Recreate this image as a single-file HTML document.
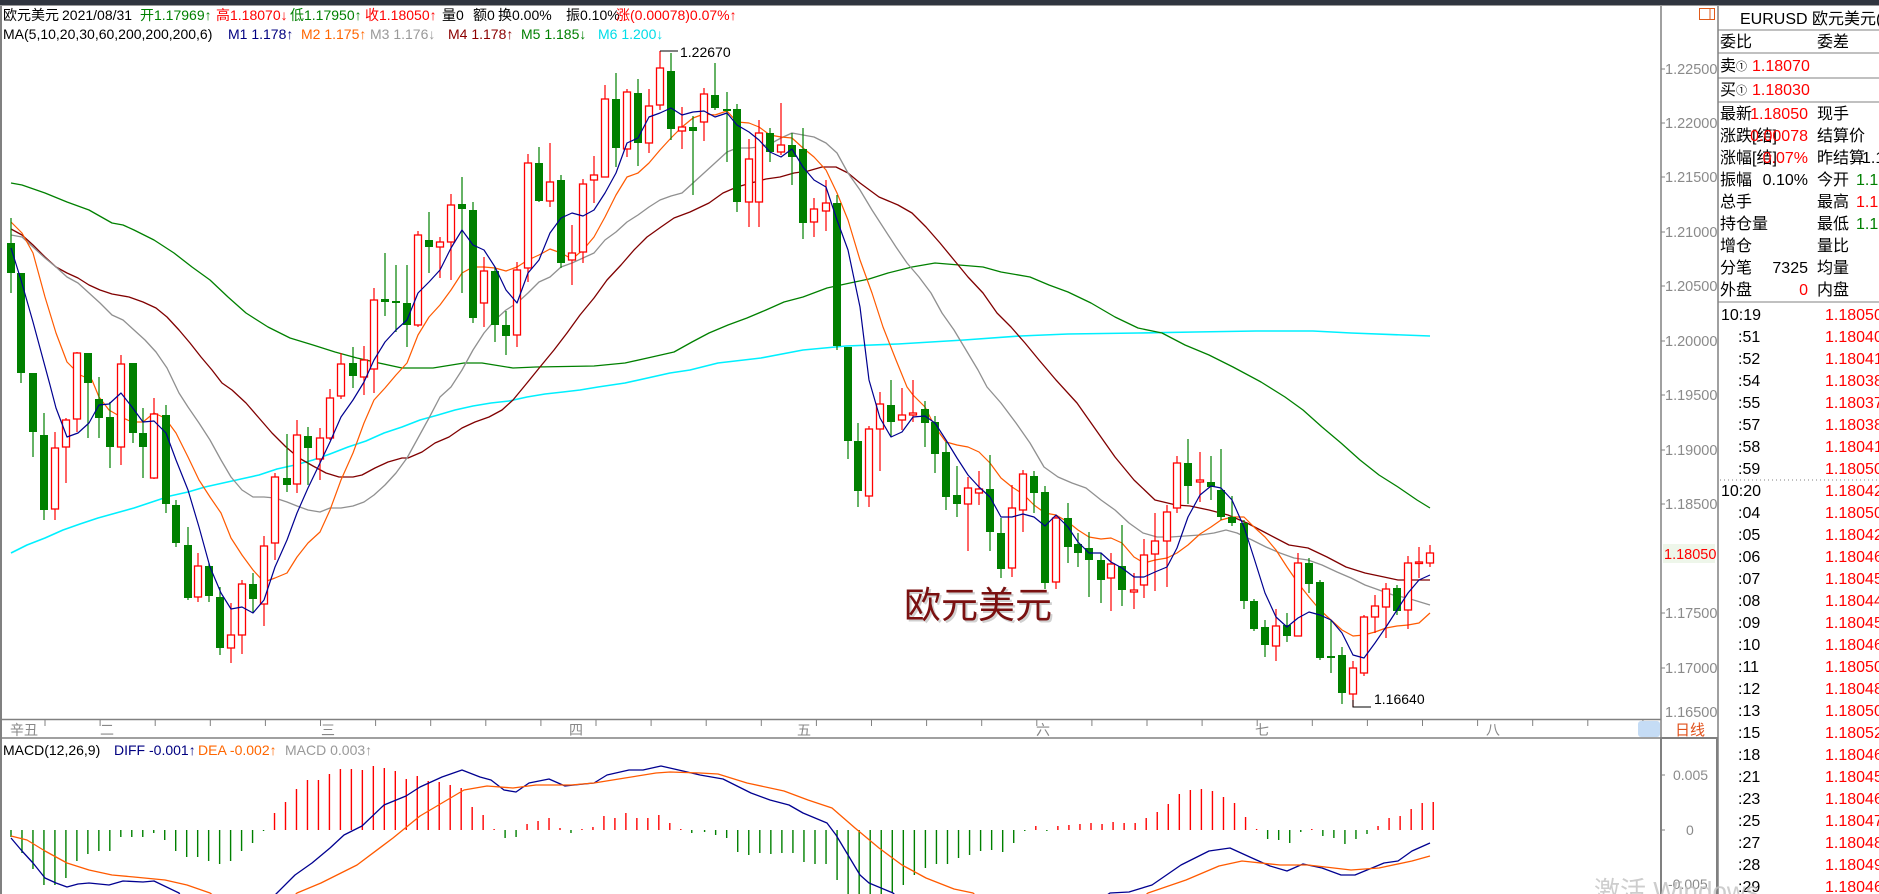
<!DOCTYPE html>
<html><head><meta charset="utf-8">
<style>
html,body{margin:0;padding:0;background:#fff;overflow:hidden}
svg{display:block;font-family:"Liberation Sans","Noto Sans CJK SC",sans-serif}
</style></head>
<body>
<svg id="s" xmlns="http://www.w3.org/2000/svg" width="1879" height="894" viewBox="0 0 1879 894">
<defs>
<clipPath id="cp"><rect x="1" y="44" width="1659" height="675"/></clipPath>
<clipPath id="cm"><rect x="1" y="760" width="1659" height="134"/></clipPath>
</defs>
<rect x="0" y="0" width="1879" height="894" fill="#fff"/>
<rect x="0" y="0" width="1879" height="5" fill="#30353f"/>
<line x1="0" y1="5.5" x2="1879" y2="5.5" stroke="#9a9a9a"/>
<line x1="1" y1="6" x2="1" y2="894" stroke="#808080" stroke-width="2"/>
<line x1="1661" y1="6" x2="1661" y2="894" stroke="#808080" stroke-width="1.5"/>
<line x1="1718" y1="6" x2="1718" y2="894" stroke="#808080" stroke-width="1.5"/>
<line x1="0" y1="719.5" x2="1661" y2="719.5" stroke="#808080" stroke-width="1.5"/>
<line x1="0" y1="738" x2="1718" y2="738" stroke="#808080" stroke-width="1.5"/>
<rect x="1661" y="738" width="56" height="160" fill="none" stroke="#808080" stroke-width="2"/>

<g font-size="14">
<text x="3" y="20" fill="#000">欧元美元</text>
<text x="62" y="20" fill="#000">2021/08/31</text>
<text x="140" y="20" fill="#008000">开1.17969↑</text>
<text x="216" y="20" fill="#ff0000">高1.18070↓</text>
<text x="290" y="20" fill="#008000">低1.17950↑</text>
<text x="365" y="20" fill="#ff0000">收1.18050↑</text>
<text x="442" y="20" fill="#000">量0</text>
<text x="473" y="20" fill="#000">额0</text>
<text x="498" y="20" fill="#000">换0.00%</text>
<text x="566" y="20" fill="#000">振0.10%</text>
<text x="616" y="20" fill="#ff0000">涨(0.00078)0.07%↑</text>
<text x="3" y="39" fill="#000">MA(5,10,20,30,60,200,200,200,6)</text>
<text x="228" y="39" fill="#000080">M1 1.178↑</text>
<text x="301" y="39" fill="#ff6600">M2 1.175↑</text>
<text x="370" y="39" fill="#999">M3 1.176↓</text>
<text x="448" y="39" fill="#8b0000">M4 1.178↑</text>
<text x="521" y="39" fill="#008000">M5 1.185↓</text>
<text x="598" y="39" fill="#00dde8">M6 1.200↓</text>
</g>

<g id="chart" clip-path="url(#cp)"></g>
<g id="macd" clip-path="url(#cm)"></g>

<polyline points="660,51 678,51" stroke="#000" fill="none"/>
<text x="680" y="57" font-size="14" fill="#000">1.22670</text>
<polyline points="1353,700 1353,707 1371,707" stroke="#000" fill="none"/>
<text x="1374" y="704" font-size="14" fill="#000">1.16640</text>
<text x="906" y="620" font-size="37" fill="#d0d0d0">欧元美元</text>
<text x="904" y="618" font-size="37" fill="#7a1010">欧元美元</text>

<g font-size="14.5" fill="#8a8a8a" stroke="none">
<text x="1665" y="74">1.22500</text>
<text x="1665" y="128">1.22000</text>
<text x="1665" y="182">1.21500</text>
<text x="1665" y="237">1.21000</text>
<text x="1665" y="291">1.20500</text>
<text x="1665" y="346">1.20000</text>
<text x="1665" y="400">1.19500</text>
<text x="1665" y="455">1.19000</text>
<text x="1665" y="509">1.18500</text>
<text x="1665" y="618">1.17500</text>
<text x="1665" y="673">1.17000</text>
<text x="1665" y="717">1.16500</text>
</g>
<g stroke="#808080">
<line x1="1661" y1="69" x2="1665" y2="69"/><line x1="1661" y1="123" x2="1665" y2="123"/>
<line x1="1661" y1="177" x2="1665" y2="177"/><line x1="1661" y1="232" x2="1665" y2="232"/>
<line x1="1661" y1="286" x2="1665" y2="286"/><line x1="1661" y1="341" x2="1665" y2="341"/>
<line x1="1661" y1="395" x2="1665" y2="395"/><line x1="1661" y1="450" x2="1665" y2="450"/>
<line x1="1661" y1="504" x2="1665" y2="504"/><line x1="1661" y1="613" x2="1665" y2="613"/>
<line x1="1661" y1="668" x2="1665" y2="668"/><line x1="1661" y1="775" x2="1665" y2="775"/>
<line x1="1661" y1="830" x2="1665" y2="830"/>
</g>
<rect x="1663" y="544" width="52" height="19" fill="#eef6ea"/>
<text x="1664" y="559" font-size="14.5" fill="#ff0000">1.18050</text>
<rect x="1699.5" y="8.5" width="15" height="11" fill="none" stroke="#e05a1a"/>
<line x1="1710" y1="8.5" x2="1710" y2="19.5" stroke="#e05a1a"/>

<g id="ticks" stroke="#808080"></g>
<g font-size="14" fill="#888">
<text x="10" y="735">辛丑</text>
<text x="100" y="735">二</text>
<text x="321" y="735">三</text>
<text x="569" y="735">四</text>
<text x="797" y="735">五</text>
<text x="1036" y="735">六</text>
<text x="1255" y="735">七</text>
<text x="1486" y="735">八</text>
</g>
<rect x="1638" y="721" width="22" height="16" rx="3" fill="#c5dcf5"/>
<text x="1675" y="735" font-size="15" fill="#e0501a">日线</text>

<g font-size="14">
<text x="3" y="755" fill="#000">MACD(12,26,9)</text>
<text x="114" y="755" fill="#000080">DIFF -0.001↑</text>
<text x="198" y="755" fill="#ff6600">DEA -0.002↑</text>
<text x="285" y="755" fill="#999">MACD 0.003↑</text>
</g>
<g font-size="14" fill="#8a8a8a">
<text x="1673" y="780">0.005</text>
<text x="1686" y="835">0</text>
<text x="1668" y="889">-0.005</text>
</g>

<g font-size="16" fill="#000">
<text x="1740" y="24">EURUSD 欧元美元(</text>
<line x1="1718" y1="30" x2="1879" y2="30" stroke="#808080"/>
<text x="1720" y="47">委比</text><text x="1817" y="47">委差</text>
<line x1="1718" y1="53" x2="1879" y2="53" stroke="#808080"/>
<text x="1720" y="71">卖</text><text x="1736" y="70" font-size="11">①</text><text x="1752" y="71" fill="#ff0000">1.18070</text>
<line x1="1718" y1="78" x2="1879" y2="78" stroke="#808080"/>
<text x="1720" y="95">买</text><text x="1736" y="94" font-size="11">①</text><text x="1752" y="95" fill="#ff0000">1.18030</text>
<line x1="1718" y1="102" x2="1879" y2="102" stroke="#808080"/>
<text x="1720" y="119">最新</text><text x="1808" y="119" text-anchor="end" fill="#ff0000">1.18050</text><text x="1817" y="119">现手</text>
<text x="1720" y="141">涨跌[结]</text><text x="1808" y="141" text-anchor="end" fill="#ff0000">0.00078</text><text x="1817" y="141">结算价</text>
<text x="1720" y="163">涨幅[结]</text><text x="1808" y="163" text-anchor="end" fill="#ff0000">0.07%</text><text x="1817" y="163">昨结算</text><text x="1862" y="163">1.17</text>
<text x="1720" y="185">振幅</text><text x="1808" y="185" text-anchor="end">0.10%</text><text x="1817" y="185">今开</text><text x="1856" y="185" fill="#008000">1.17</text>
<text x="1720" y="207">总手</text><text x="1817" y="207">最高</text><text x="1856" y="207" fill="#ff0000">1.18</text>
<text x="1720" y="229">持仓量</text><text x="1817" y="229">最低</text><text x="1856" y="229" fill="#008000">1.17</text>
<text x="1720" y="251">增仓</text><text x="1817" y="251">量比</text>
<text x="1720" y="273">分笔</text><text x="1808" y="273" text-anchor="end">7325</text><text x="1817" y="273">均量</text>
<text x="1720" y="295">外盘</text><text x="1808" y="295" text-anchor="end" fill="#ff0000">0</text><text x="1817" y="295">内盘</text>
<line x1="1718" y1="302" x2="1879" y2="302" stroke="#808080"/>
<line x1="1720" y1="480" x2="1879" y2="480" stroke="#808080" stroke-dasharray="1,3"/>
</g>
<g id="tk" font-size="16"></g>
<text x="1594" y="900" font-size="26" fill="#c0c0c0" fill-opacity="0.8">激活 Windows</text>
</svg>
<script>
(function(){
var NS="http://www.w3.org/2000/svg";
function el(p,t,a){var e=document.createElementNS(NS,t);for(var k in a)e.setAttribute(k,a[k]);p.appendChild(e);return e;}
var ch=document.getElementById("chart"),mc=document.getElementById("macd");
var C=[[11,243,273,218,293,0],[21,273,373,273,383,0],[33,373,432,373,457,0],[44,435,510,413,520,0],[55,448,509,432,520,1],[66,420,447,418,483,1],[77,353,419,352,432,1],[88,353,383,353,438,0],[99,399,418,377,438,0],[110,417,447,402,468,0],[121,364,447,355,465,1],[133,363,433,363,443,0],[143,433,447,408,478,0],[154,414,478,398,479,1],[166,415,504,405,513,0],[176,505,543,500,547,0],[188,545,598,527,600,0],[198,566,597,553,602,1],[209,566,596,563,602,0],[220,597,648,587,655,0],[231,635,648,603,663,1],[242,584,635,580,654,1],[253,584,599,573,613,0],[264,546,604,536,626,1],[275,477,543,473,560,1],[287,478,485,434,492,0],[297,435,484,420,493,1],[308,436,448,427,485,0],[320,438,459,428,480,1],[330,398,438,389,440,1],[341,364,396,353,399,1],[353,363,376,347,388,0],[364,360,377,346,395,1],[374,300,369,288,393,1],[385,299,302,253,316,0],[396,301,303,265,332,0],[407,303,325,265,347,0],[418,235,325,231,327,1],[429,240,247,212,273,0],[440,242,247,237,278,1],[451,205,242,194,280,1],[462,204,209,177,293,0],[473,210,318,202,323,0],[484,271,303,257,327,1],[495,271,325,267,342,0],[506,325,336,311,355,0],[517,270,335,262,347,1],[528,163,268,154,282,1],[539,163,201,147,202,0],[550,182,201,143,207,1],[561,180,263,175,268,0],[572,253,260,225,285,1],[583,184,252,179,263,1],[594,175,180,156,203,1],[605,99,177,85,177,1],[616,99,148,73,167,0],[627,92,149,89,157,1],[638,93,143,79,166,0],[649,106,143,89,153,1],[660,68,105,51,110,1],[671,71,129,53,140,0],[682,127,131,107,149,1],[693,127,131,116,195,0],[704,94,122,88,141,1],[715,95,108,63,110,0],[727,109,111,92,162,0],[737,109,202,104,212,0],[749,159,202,139,227,1],[759,133,202,120,227,1],[770,133,152,128,162,0],[781,145,152,103,155,1],[792,145,157,133,185,0],[803,149,223,128,239,0],[814,209,222,198,237,1],[826,203,211,180,231,1],[837,203,346,195,350,0],[848,347,441,347,459,0],[858,441,491,423,507,0],[869,429,496,426,507,1],[880,404,429,392,471,1],[891,405,422,380,437,0],[902,415,420,388,430,1],[913,413,415,380,422,1],[925,409,423,401,447,0],[935,422,454,416,473,0],[946,452,497,442,510,0],[957,495,504,466,517,0],[968,488,504,477,551,1],[979,489,493,471,505,1],[990,489,532,455,551,0],[1001,533,569,518,578,0],[1012,508,568,485,577,1],[1023,474,510,470,532,1],[1034,476,493,471,513,0],[1045,492,583,486,589,0],[1056,518,582,515,589,1],[1068,518,547,503,563,0],[1078,544,553,533,567,0],[1089,548,560,532,597,0],[1101,560,580,553,603,0],[1111,564,578,553,611,1],[1122,566,590,525,606,0],[1134,590,592,573,609,1],[1144,555,585,539,598,1],[1155,541,554,513,591,1],[1167,512,541,505,587,1],[1177,463,508,456,513,1],[1188,463,486,439,504,0],[1200,480,482,452,502,1],[1211,482,487,456,500,0],[1221,490,517,449,520,0],[1232,517,523,496,526,0],[1244,523,601,520,609,0],[1254,601,629,599,631,0],[1265,627,645,620,657,0],[1276,626,646,609,661,1],[1287,625,636,613,642,0],[1298,563,636,553,636,1],[1309,563,584,558,593,0],[1320,582,658,580,660,0],[1331,656,658,620,673,0],[1342,655,693,647,704,0],[1353,668,694,661,707,1],[1364,617,673,615,676,1],[1375,606,617,595,633,1],[1386,589,607,583,638,1],[1397,588,611,585,615,0],[1408,563,610,556,629,1],[1419,562,563,547,578,1],[1430,553,563,545,567,1]];
function pl(g,pts,col,w){el(g,"polyline",{points:pts.map(function(p){return p.join(",")}).join(" "),fill:"none",stroke:col,"stroke-width":w||1.2,"stroke-linejoin":"round"});}
var cyan=[[11,553],[27,545],[45,538],[63,530],[80,524],[98,518],[116,513],[134,508],[152,502],[170,496],[188,492],[205,487],[223,483],[241,479],[259,475],[277,469],[295,465],[313,460],[330,454],[348,447],[366,441],[384,433],[402,427],[420,420],[438,415],[455,410],[473,406],[491,403],[509,401],[527,397],[545,394],[563,392],[580,390],[598,387],[625,383],[670,373],[690,370],[718,363],[761,358],[803,350],[846,346],[898,344],[964,340],[1020,336],[1068,334],[1138,333],[1195,332],[1256,331],[1313,331],[1351,333],[1430,336]];
var green=[[11,183],[22,185],[45,193],[67,202],[89,210],[112,223],[123,225],[134,230],[154,240],[174,253],[192,267],[210,280],[228,297],[246,313],[268,327],[290,338],[313,345],[335,352],[357,358],[379,363],[402,368],[433,368],[464,363],[482,363],[513,368],[536,367],[594,366],[625,363],[652,357],[674,352],[692,342],[709,333],[728,325],[747,318],[766,310],[784,302],[803,297],[827,288],[850,283],[869,279],[888,273],[912,267],[935,263],[959,265],[983,267],[1001,272],[1030,277],[1049,285],[1068,292],[1091,303],[1115,317],[1138,328],[1162,333],[1185,345],[1209,355],[1233,367],[1261,382],[1285,397],[1303,410],[1322,427],[1341,443],[1360,460],[1379,475],[1398,487],[1417,500],[1430,508]];
var dred=[[11,229],[22,235],[33,245],[45,257],[56,267],[67,273],[78,278],[89,285],[100,290],[112,294],[129,297],[143,302],[156,308],[167,317],[179,330],[190,343],[201,357],[212,370],[222,383],[232,390],[246,403],[259,418],[272,433],[286,447],[299,458],[313,466],[326,473],[339,477],[353,477],[362,475],[375,468],[388,462],[402,458],[408,458],[422,452],[435,443],[449,437],[462,428],[475,422],[489,417],[502,410],[513,400],[527,383],[540,367],[554,350],[567,333],[580,315],[594,298],[607,280],[621,265],[634,250],[647,237],[661,227],[674,218],[690,212],[709,203],[723,193],[737,187],[751,183],[766,179],[780,177],[794,173],[808,171],[822,167],[836,167],[848,173],[860,183],[879,197],[898,205],[912,213],[926,227],[940,243],[954,260],[968,277],[983,293],[997,313],[1011,327],[1025,343],[1039,360],[1056,380],[1077,403],[1096,430],[1115,457],[1134,480],[1155,500],[1176,505],[1190,506],[1209,510],[1228,515],[1247,523],[1266,533],[1289,545],[1308,548],[1327,557],[1346,567],[1365,573],[1384,577],[1398,580],[1430,580]];
var gray=[[11,235],[22,237],[33,247],[45,258],[56,267],[67,277],[78,283],[89,293],[100,303],[112,315],[123,320],[134,330],[145,340],[156,352],[167,368],[179,393],[188,407],[199,423],[210,440],[221,460],[231,477],[242,490],[253,497],[264,497],[275,498],[287,502],[297,506],[308,510],[320,512],[330,508],[341,508],[353,506],[364,502],[374,495],[385,485],[396,473],[407,458],[418,438],[429,418],[440,397],[451,387],[462,370],[473,350],[484,333],[495,320],[506,310],[517,303],[528,293],[539,282],[550,277],[561,267],[572,263],[583,258],[594,253],[605,240],[616,232],[627,222],[638,215],[649,207],[660,200],[671,196],[682,193],[693,183],[704,173],[715,163],[727,152],[737,148],[749,148],[759,147],[770,144],[781,138],[792,133],[803,135],[814,137],[826,143],[837,153],[848,173],[860,190],[872,210],[883,227],[896,247],[907,263],[919,277],[931,293],[942,313],[954,330],[966,350],[978,370],[987,387],[1001,403],[1016,423],[1030,443],[1044,467],[1058,477],[1072,483],[1086,488],[1101,500],[1115,510],[1129,523],[1143,533],[1157,537],[1171,537],[1185,536],[1200,535],[1214,533],[1226,530],[1237,533],[1252,540],[1266,547],[1280,553],[1294,558],[1308,560],[1322,565],[1337,572],[1351,578],[1365,585],[1379,590],[1393,595],[1407,598],[1430,605]];
var orange=[[11,222],[22,233],[33,253],[45,297],[56,333],[67,362],[80,375],[92,380],[99,397],[109,410],[121,417],[132,422],[143,422],[154,413],[165,418],[176,433],[188,457],[199,480],[210,497],[221,513],[231,538],[242,555],[253,570],[264,582],[275,578],[287,573],[297,557],[308,543],[320,532],[330,510],[341,480],[353,453],[364,423],[374,400],[385,388],[396,375],[407,363],[418,335],[429,317],[440,305],[451,290],[462,273],[473,267],[484,267],[495,268],[506,271],[517,267],[528,260],[539,255],[550,249],[561,253],[572,259],[583,250],[594,237],[605,217],[616,195],[627,177],[638,173],[649,163],[660,150],[671,138],[682,127],[693,118],[704,114],[715,115],[727,111],[737,122],[749,123],[759,127],[770,135],[781,137],[792,138],[803,148],[814,157],[826,170],[837,193],[848,220],[860,260],[872,293],[883,327],[896,360],[907,387],[913,395],[925,407],[935,427],[946,442],[957,445],[968,447],[979,452],[990,463],[1001,478],[1012,487],[1023,494],[1034,505],[1045,513],[1056,515],[1068,522],[1078,530],[1089,537],[1101,539],[1111,538],[1122,543],[1134,557],[1144,563],[1155,560],[1167,558],[1177,553],[1188,545],[1200,534],[1211,527],[1221,520],[1232,517],[1244,517],[1254,527],[1265,537],[1276,550],[1287,567],[1298,583],[1309,597],[1320,610],[1331,620],[1342,630],[1353,636],[1364,635],[1375,632],[1386,628],[1397,626],[1408,625],[1419,623],[1430,613]];
var blue=[[11,248],[21,280],[33,322],[50,385],[56,408],[67,437],[78,433],[89,423],[99,405],[109,404],[121,393],[132,407],[143,422],[154,421],[166,433],[176,460],[188,490],[199,527],[210,567],[221,593],[231,609],[242,607],[253,613],[264,600],[275,567],[287,540],[297,513],[308,488],[320,463],[330,442],[341,417],[353,400],[364,382],[374,360],[385,342],[396,330],[407,320],[418,293],[429,282],[440,270],[451,248],[462,230],[473,245],[484,250],[495,267],[506,290],[517,303],[528,273],[539,260],[550,233],[561,218],[572,213],[583,216],[594,210],[605,193],[616,173],[627,143],[638,138],[649,117],[660,113],[671,108],[682,115],[693,112],[704,111],[715,117],[727,113],[737,125],[749,132],[759,140],[770,152],[781,157],[792,149],[803,167],[814,180],[826,187],[837,220],[848,250],[860,307],[869,380],[880,418],[891,437],[902,432],[913,417],[925,416],[935,423],[946,440],[957,458],[968,475],[979,487],[990,497],[1001,517],[1012,517],[1023,514],[1034,517],[1045,526],[1056,515],[1068,527],[1078,542],[1089,553],[1101,553],[1111,562],[1122,568],[1134,577],[1144,577],[1155,572],[1167,567],[1177,548],[1188,517],[1200,495],[1211,486],[1221,488],[1232,500],[1244,527],[1254,558],[1265,593],[1276,617],[1287,627],[1298,618],[1309,612],[1320,615],[1331,620],[1342,633],[1353,655],[1364,658],[1375,643],[1386,627],[1397,610],[1408,593],[1419,580],[1430,575]];
pl(ch,cyan,"#00f0ff",1.6);pl(ch,green,"#008000",1.3);pl(ch,dred,"#800000",1.3);pl(ch,gray,"#909090",1.3);pl(ch,orange,"#ff5a00",1.2);
C.forEach(function(c){var x=c[0],col=c[5]?"#ff0000":"#008000";
 el(ch,"line",{x1:x,y1:c[3],x2:x,y2:c[4],stroke:col,"stroke-width":1.2});
 var h=Math.max(c[2]-c[1],1.5);
 if(c[5])el(ch,"rect",{x:x-3.5,y:c[1],width:7,height:h,fill:"#fff",stroke:col,"stroke-width":1.3});
 else el(ch,"rect",{x:x-4,y:c[1],width:8,height:h,fill:col});
});
pl(ch,blue,"#000090",1.2);
var M1=[-7,-23,-39,-55,-55,-48,-31,-24,-21,-21,-7,-7,-7,-3,-10,-21,-27,-27,-31,-34,-31,-21,-13,-1,17,28,41,50,50,56,61,61,60,64,62,59,51,54,49,48,45,42,23,15,1,-8,-7,6,9,12,2,-3,1,3,14,12,17,12,12,15,7,1,-3];
var M2=[-2,-5,-8,-22,-25,-23,-24,-23,-23,-32,-34,-34,-50,-70,-70,-70,-70,-63,-55,-45,-38,-34,-34,-28,-25,-21,-20,-22,-13,-1,4,-1,4,5,6,7,6,8,7,7,12,18,26,36,40,41,39,33,27,13,1,-9,-10,-13,-2,1,-6,-8,-14,-9,-4,4,12,14,21,27,28];
M1.forEach(function(v,i){var x=11+i*10.98;el(mc,"line",{x1:x,y1:830,x2:x,y2:830-v,stroke:v>0?"#ff0000":"#008000","stroke-width":1.4});});
M2.forEach(function(v,i){var x=704.6+i*11.04;el(mc,"line",{x1:x,y1:830,x2:x,y2:830-v,stroke:v>0?"#ff0000":"#008000","stroke-width":1.4});});
var diff=[[11,838],[22,851],[33,863],[45,878],[56,883],[67,887],[78,884],[89,883],[109,885],[123,881],[143,882],[154,881],[179,893],[183,900],[270,900],[277,893],[295,875],[312,863],[330,848],[344,835],[362,826],[384,805],[406,796],[420,787],[442,777],[462,770],[480,777],[491,780],[504,790],[516,792],[529,783],[549,779],[565,786],[574,785],[594,783],[607,775],[629,770],[643,770],[661,766],[683,771],[700,775],[723,779],[737,786],[751,793],[770,800],[789,805],[803,813],[827,823],[836,835],[848,855],[860,875],[869,883],[893,893],[900,900],[1100,900],[1110,893],[1129,892],[1152,885],[1181,865],[1209,851],[1230,848],[1252,858],[1270,866],[1287,871],[1303,864],[1322,868],[1341,875],[1355,875],[1384,863],[1398,861],[1412,851],[1430,843]];
var dea=[[11,836],[27,840],[45,851],[67,863],[89,870],[112,875],[134,877],[165,880],[187,885],[210,893],[219,900],[290,900],[297,893],[321,883],[357,865],[393,838],[420,816],[442,803],[464,790],[487,786],[513,788],[536,785],[571,785],[594,783],[625,778],[656,773],[670,772],[700,773],[718,774],[747,783],[784,791],[808,800],[832,808],[855,828],[879,848],[902,865],[926,878],[954,889],[973,893],[980,900],[1140,900],[1148,893],[1186,880],[1219,866],[1242,861],[1280,865],[1308,865],[1351,870],[1379,868],[1412,861],[1430,856]];
pl(mc,diff,"#000090",1.3);pl(mc,dea,"#ff5a00",1.3);
var tg=document.getElementById("ticks");
for(var x=45;x<1660;x+=55.1){el(tg,"line",{x1:x,y1:720,x2:x,y2:726});}
var tk=document.getElementById("tk");
var T=[["10:19","1.18050"],[":51","1.18040"],[":52","1.18041"],[":54","1.18038"],[":55","1.18037"],[":57","1.18038"],[":58","1.18041"],[":59","1.18050"],["10:20","1.18042"],[":04","1.18050"],[":05","1.18042"],[":06","1.18046"],[":07","1.18045"],[":08","1.18044"],[":09","1.18045"],[":10","1.18046"],[":11","1.18050"],[":12","1.18048"],[":13","1.18050"],[":15","1.18052"],[":18","1.18046"],[":21","1.18045"],[":23","1.18046"],[":25","1.18047"],[":27","1.18048"],[":28","1.18049"],[":29","1.18046"]];
T.forEach(function(t,i){var y=320+i*22;var a=el(tk,"text",{x:t[0].length>3?1721:1738,y:y,fill:"#000"});a.textContent=t[0];var b=el(tk,"text",{x:1825,y:y,fill:"#ff0000"});b.textContent=t[1];});
})();
</script>
</body></html>
